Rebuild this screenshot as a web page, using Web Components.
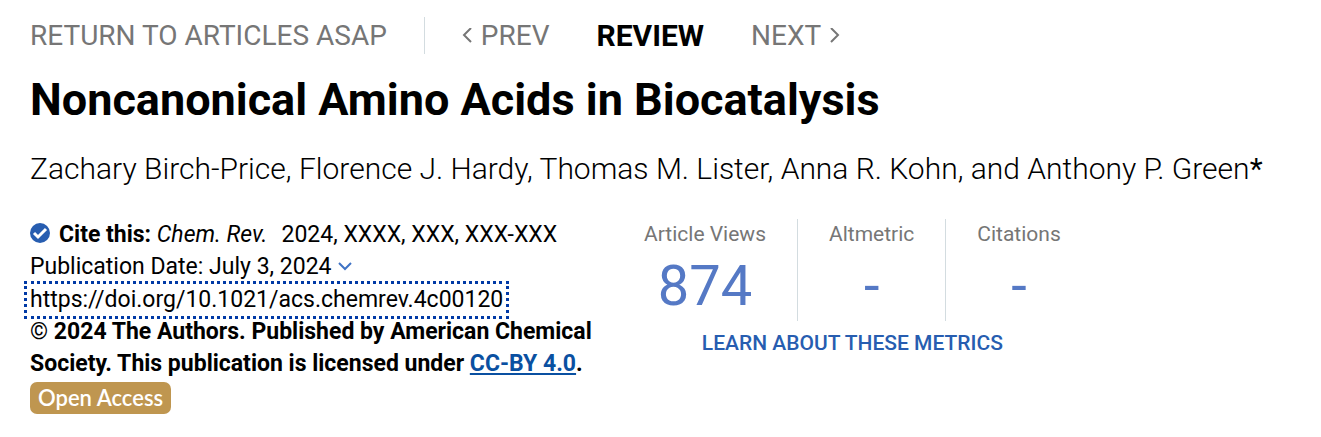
<!DOCTYPE html>
<html lang="en">
<head>
<meta charset="utf-8">
<meta name="viewport" content="width=device-width, initial-scale=1">
<title>Noncanonical Amino Acids in Biocatalysis</title>
<style>
body { margin: 0; background: #fff; color: #000; font-family: Roboto, "Liberation Sans", sans-serif; }
</style>
</head>
<body>
<article-header></article-header>

<template id="article-header">
<style>
:host { display: block; padding: 17px 30px 23px; }
h1 { margin: 16px 0 0; font-size: 45px; line-height: 60px; font-weight: 700; }
.authors { margin: 19px 0 0; font-size: 30px; line-height: 40px; font-weight: 300; }
.authors b { font-weight: 400; }
.details { display: flex; align-items: flex-start; flex-wrap: wrap; gap: 18px; margin-top: 30px; }
article-citation { flex: 0 1 565px; }
</style>
<article-nav></article-nav>
<h1>Noncanonical Amino Acids in Biocatalysis</h1>
<p class="authors">Zachary Birch-Price, Florence J. Hardy, Thomas M. Lister, Anna R. Kohn, and Anthony P. Green<b>*</b></p>
<div class="details">
<article-citation></article-citation>
<article-metrics>
<metric-item label="Article Views">874</metric-item>
<metric-item label="Altmetric">-</metric-item>
<metric-item label="Citations">-</metric-item>
</article-metrics>
</div>
</template>

<template id="article-nav">
<style>
:host { display: block; }
nav { display: flex; align-items: center; font-size: 28px; line-height: 37px; }
a { color: #767676; text-decoration: none; white-space: nowrap; }
.back { padding-right: 37px; border-right: 1px solid #d3dce0; }
.steps { display: flex; align-items: center; gap: 47px; padding-left: 37px; }
.steps a { display: flex; align-items: center; gap: 9px; }
strong { font-size: 30px; font-weight: 700; }
svg { display: block; width: 10px; height: 16px; fill: none; stroke: #767676; stroke-width: 2; }
</style>
<nav aria-label="Article">
<a class="back" href="#asap">RETURN TO ARTICLES ASAP</a>
<div class="steps">
<a href="#prev"><svg viewBox="0 0 10 16" aria-hidden="true"><path d="M9 0 2 7l7 7"/></svg>PREV</a>
<strong>REVIEW</strong>
<a href="#next">NEXT<svg viewBox="0 0 10 16" aria-hidden="true"><path d="m1 0 7 7-7 7"/></svg></a>
</div>
</nav>
</template>

<template id="article-citation">
<style>
:host { display: block; font-size: 23px; line-height: 32px; }
div { display: flex; align-items: center; }
p { margin: 0; }
.check { width: 20px; height: 24px; margin-right: 9px; flex: none; }
.vol { margin-left: 14px; }
b, .rights { font-weight: 700; }
button { display: flex; border: 0; padding: 0; margin: 0 0 0 6px; background: none; }
.doi { display: table; box-sizing: border-box; margin: -2px 0 -3px -6px; padding: 0 3px; border: 3px dotted #0039a6; color: #000; text-decoration: none; }
.rights span { font-weight: 400; }
.rights a { color: #0a50a1; text-decoration: underline; text-decoration-thickness: 2px; text-underline-offset: 2px; }
.badge { display: table; padding: 0 8px; margin-top: 2px; border-radius: 7px; background: #bf9650; color: #fff; font: 600 22px/32px Lato, sans-serif; }
</style>
<div><svg class="check" viewBox="0 0 20 24" aria-hidden="true"><circle cx="10" cy="10" r="10" fill="#275db0"/><path d="m4 10 4 4 8-8" fill="none" stroke="#fff" stroke-width="3"/></svg><p><b>Cite this:</b> <i>Chem. Rev.</i><span class="vol">2024, XXXX, XXX, XXX-XXX</span></p></div>
<div>Publication Date: July 3, 2024<button aria-label="Publication history" aria-expanded="false"><svg width="14" height="11" viewBox="0 0 14 11" aria-hidden="true"><path d="m1 1 6 6 6-6" fill="none" stroke="#3f73c5" stroke-width="2"/></svg></button></div>
<a class="doi" href="https://doi.org/10.1021/acs.chemrev.4c00120">https://doi.org/10.1021/acs.chemrev.4c00120</a>
<p class="rights"><span>©</span> 2024 The Authors. Published by American Chemical Society. This publication is licensed under <a href="#license">CC-BY 4.0</a>.</p>
<span class="badge">Open Access</span>
</template>

<template id="article-metrics">
<style>
:host { display: block; }
.row { display: flex; }
.learn { display: block; text-align: center; font-size: 21px; line-height: 32px; margin-top: 6px; font-weight: 500; color: #275db0; text-decoration: none; }
</style>
<div class="row"><slot></slot></div>
<a class="learn" href="#metrics">LEARN ABOUT THESE METRICS</a>
</template>

<template id="metric-item">
<style>
:host { display: block; padding: 0 31px; height: 102px; text-align: center; border-right: 1px solid #d3dce0; }
:host(:last-child) { border-right: 0; }
.label { font-size: 21px; line-height: 30px; color: #767676; }
.value { font-size: 56px; line-height: 74px; color: #5579c5; }
</style>
<div class="label"></div>
<div class="value"><slot></slot></div>
</template>

<script>
function define(name, setup) {
  customElements.define(name, class extends HTMLElement {
    constructor() {
      super();
      const root = this.attachShadow({ mode: "open" });
      root.append(document.getElementById(name).content.cloneNode(true));
    }
    connectedCallback() {
      if (setup) setup(this);
    }
  });
}
define("metric-item", el => {
  el.shadowRoot.querySelector(".label").textContent = el.getAttribute("label");
});
define("article-metrics");
define("article-citation");
define("article-nav");
define("article-header");
</script>
</body>
</html>
